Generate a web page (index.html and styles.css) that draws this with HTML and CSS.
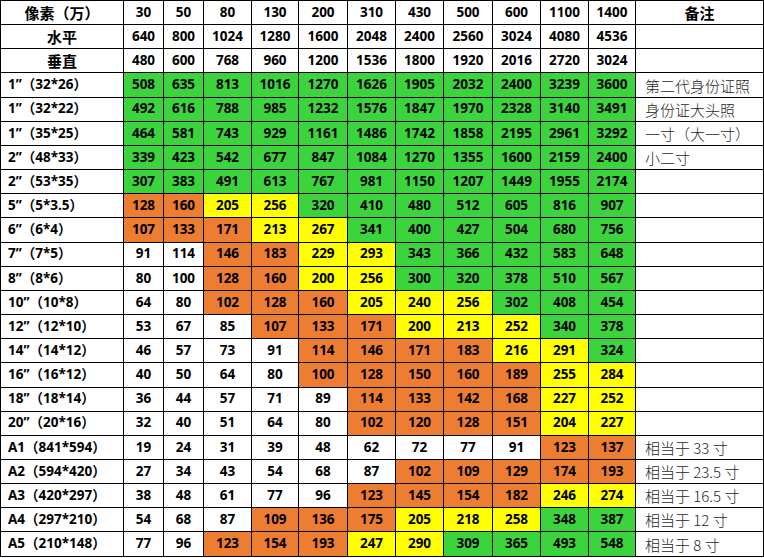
FILE: index.html
```html
<!DOCTYPE html>
<html lang="zh">
<head>
<meta charset="utf-8">
<title>像素与冲印尺寸对照表</title>
<link rel="stylesheet" href="styles.css">
</head>
<body>
<table class="grid">
  <colgroup>
    <col class="c-label">
    <col class="c40"><col class="c40"><col class="c48"><col class="c47"><col class="c49"><col class="c48">
    <col class="c48"><col class="c49"><col class="c48"><col class="c48"><col class="c47">
    <col class="c-note">
  </colgroup>
  <tbody>
    <tr class="head"><td class="hl">像素（万）</td><td>30</td><td>50</td><td>80</td><td>130</td><td>200</td><td>310</td><td>430</td><td>500</td><td>600</td><td>1100</td><td>1400</td><td class="hn">备注</td></tr>
    <tr class="head"><td class="hl">水平</td><td>640</td><td>800</td><td>1024</td><td>1280</td><td>1600</td><td>2048</td><td>2400</td><td>2560</td><td>3024</td><td>4080</td><td>4536</td><td class="note"></td></tr>
    <tr class="head"><td class="hl">垂直</td><td>480</td><td>600</td><td>768</td><td>960</td><td>1200</td><td>1536</td><td>1800</td><td>1920</td><td>2016</td><td>2720</td><td>3024</td><td class="note"></td></tr>
    <tr><td class="lb">1”（32*26）</td><td class="g">508</td><td class="g">635</td><td class="g">813</td><td class="g">1016</td><td class="g">1270</td><td class="g">1626</td><td class="g">1905</td><td class="g">2032</td><td class="g">2400</td><td class="g">3239</td><td class="g">3600</td><td class="note">第二代身份证照</td></tr>
    <tr><td class="lb">1”（32*22）</td><td class="g">492</td><td class="g">616</td><td class="g">788</td><td class="g">985</td><td class="g">1232</td><td class="g">1576</td><td class="g">1847</td><td class="g">1970</td><td class="g">2328</td><td class="g">3140</td><td class="g">3491</td><td class="note">身份证大头照</td></tr>
    <tr><td class="lb">1”（35*25）</td><td class="g">464</td><td class="g">581</td><td class="g">743</td><td class="g">929</td><td class="g">1161</td><td class="g">1486</td><td class="g">1742</td><td class="g">1858</td><td class="g">2195</td><td class="g">2961</td><td class="g">3292</td><td class="note">一寸（大一寸）</td></tr>
    <tr><td class="lb">2”（48*33）</td><td class="g">339</td><td class="g">423</td><td class="g">542</td><td class="g">677</td><td class="g">847</td><td class="g">1084</td><td class="g">1270</td><td class="g">1355</td><td class="g">1600</td><td class="g">2159</td><td class="g">2400</td><td class="note">小二寸</td></tr>
    <tr><td class="lb">2”（53*35）</td><td class="g">307</td><td class="g">383</td><td class="g">491</td><td class="g">613</td><td class="g">767</td><td class="g">981</td><td class="g">1150</td><td class="g">1207</td><td class="g">1449</td><td class="g">1955</td><td class="g">2174</td><td class="note"></td></tr>
    <tr><td class="lb">5”（5*3.5）</td><td class="o">128</td><td class="o">160</td><td class="y">205</td><td class="y">256</td><td class="g">320</td><td class="g">410</td><td class="g">480</td><td class="g">512</td><td class="g">605</td><td class="g">816</td><td class="g">907</td><td class="note"></td></tr>
    <tr><td class="lb">6”（6*4）</td><td class="o">107</td><td class="o">133</td><td class="o">171</td><td class="y">213</td><td class="y">267</td><td class="g">341</td><td class="g">400</td><td class="g">427</td><td class="g">504</td><td class="g">680</td><td class="g">756</td><td class="note"></td></tr>
    <tr><td class="lb">7”（7*5）</td><td>91</td><td>114</td><td class="o">146</td><td class="o">183</td><td class="y">229</td><td class="y">293</td><td class="g">343</td><td class="g">366</td><td class="g">432</td><td class="g">583</td><td class="g">648</td><td class="note"></td></tr>
    <tr><td class="lb">8”（8*6）</td><td>80</td><td>100</td><td class="o">128</td><td class="o">160</td><td class="y">200</td><td class="y">256</td><td class="g">300</td><td class="g">320</td><td class="g">378</td><td class="g">510</td><td class="g">567</td><td class="note"></td></tr>
    <tr><td class="lb">10”（10*8）</td><td>64</td><td>80</td><td class="o">102</td><td class="o">128</td><td class="o">160</td><td class="y">205</td><td class="y">240</td><td class="y">256</td><td class="g">302</td><td class="g">408</td><td class="g">454</td><td class="note"></td></tr>
    <tr><td class="lb">12”（12*10）</td><td>53</td><td>67</td><td>85</td><td class="o">107</td><td class="o">133</td><td class="o">171</td><td class="y">200</td><td class="y">213</td><td class="y">252</td><td class="g">340</td><td class="g">378</td><td class="note"></td></tr>
    <tr><td class="lb">14”（14*12）</td><td>46</td><td>57</td><td>73</td><td>91</td><td class="o">114</td><td class="o">146</td><td class="o">171</td><td class="o">183</td><td class="y">216</td><td class="y">291</td><td class="g">324</td><td class="note"></td></tr>
    <tr><td class="lb">16”（16*12）</td><td>40</td><td>50</td><td>64</td><td>80</td><td class="o">100</td><td class="o">128</td><td class="o">150</td><td class="o">160</td><td class="o">189</td><td class="y">255</td><td class="y">284</td><td class="note"></td></tr>
    <tr><td class="lb">18”（18*14）</td><td>36</td><td>44</td><td>57</td><td>71</td><td>89</td><td class="o">114</td><td class="o">133</td><td class="o">142</td><td class="o">168</td><td class="y">227</td><td class="y">252</td><td class="note"></td></tr>
    <tr><td class="lb">20”（20*16）</td><td>32</td><td>40</td><td>51</td><td>64</td><td>80</td><td class="o">102</td><td class="o">120</td><td class="o">128</td><td class="o">151</td><td class="y">204</td><td class="y">227</td><td class="note"></td></tr>
    <tr><td class="lb">A1（841*594）</td><td>19</td><td>24</td><td>31</td><td>39</td><td>48</td><td>62</td><td>72</td><td>77</td><td>91</td><td class="o">123</td><td class="o">137</td><td class="note">相当于 33 寸</td></tr>
    <tr><td class="lb">A2（594*420）</td><td>27</td><td>34</td><td>43</td><td>54</td><td>68</td><td>87</td><td class="o">102</td><td class="o">109</td><td class="o">129</td><td class="o">174</td><td class="o">193</td><td class="note">相当于 23.5 寸</td></tr>
    <tr><td class="lb">A3（420*297）</td><td>38</td><td>48</td><td>61</td><td>77</td><td>96</td><td class="o">123</td><td class="o">145</td><td class="o">154</td><td class="o">182</td><td class="y">246</td><td class="y">274</td><td class="note">相当于 16.5 寸</td></tr>
    <tr><td class="lb">A4（297*210）</td><td>54</td><td>68</td><td>87</td><td class="o">109</td><td class="o">136</td><td class="o">175</td><td class="y">205</td><td class="y">218</td><td class="y">258</td><td class="g">348</td><td class="g">387</td><td class="note">相当于 12 寸</td></tr>
    <tr><td class="lb">A5（210*148）</td><td>77</td><td>96</td><td class="o">123</td><td class="o">154</td><td class="o">193</td><td class="y">247</td><td class="y">290</td><td class="g">309</td><td class="g">365</td><td class="g">493</td><td class="g">548</td><td class="note">相当于 8 寸</td></tr>
  </tbody>
</table>
</body>
</html>
```

FILE: styles.css
```css
html, body {
  margin: 0;
  padding: 0;
  background: #ffffff;
}

.grid {
  border-collapse: collapse;
  table-layout: fixed;
  width: 763px;
  font-family: "Open Sans", "Noto Sans CJK SC", sans-serif;
  font-weight: 700;
  font-size: 13.5px;
  color: #000;
  text-spacing-trim: space-all;
}

.c-label { width: 123px; }
.c40 { width: 40px; }
.c47 { width: 47px; }
.c48 { width: 48px; }
.c49 { width: 49px; }
.c-note { width: 128px; }

.grid td {
  border: 1px solid #000;
  height: 23.17px;
  padding: 0;
  text-align: center;
  vertical-align: middle;
  line-height: 1;
  white-space: nowrap;
  overflow: hidden;
}

.grid td.hl,
.grid td.hn {
  font-family: "Noto Sans CJK SC", sans-serif;
  font-size: 15px;
  font-weight: 700;
}

.grid td.lb {
  text-align: left;
  padding-left: 7px;
  font-family: "Open Sans", "Noto Sans CJK SC", sans-serif;
  font-size: 13.5px;
}

.grid td.note {
  text-align: left;
  padding-left: 9px;
  font-family: "Noto Sans CJK SC", sans-serif;
  font-weight: 300;
  font-size: 15px;
  color: #262626;
}

.grid td.g { background: #3cd43c; }
.grid td.o { background: #ed7d31; }
.grid td.y { background: #ffff00; }
```
